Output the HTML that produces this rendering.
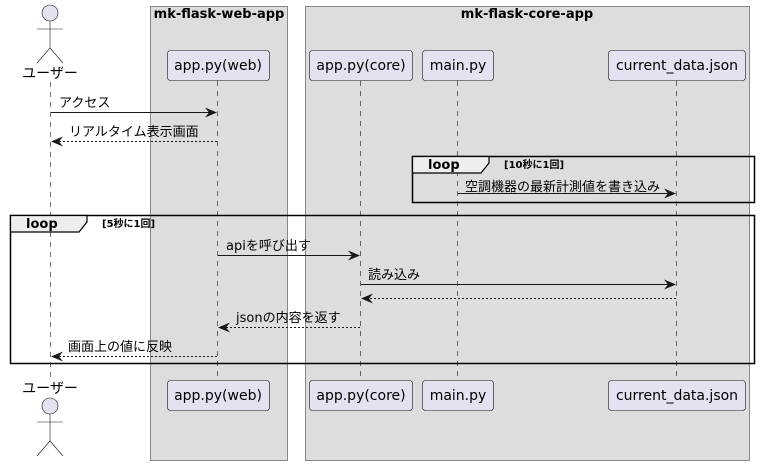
<!DOCTYPE html>
<html><head><meta charset="utf-8"><style>body{margin:0;background:#fff}svg{display:block}text{font-family:"DejaVu Sans","Noto Sans CJK JP",sans-serif}</style></head>
<body>
<svg width="760" height="465" viewBox="0 0 760 465" xmlns="http://www.w3.org/2000/svg">
<defs>
<marker id="a" viewBox="0 0 12 10" refX="11" refY="5" markerWidth="12" markerHeight="10" markerUnits="userSpaceOnUse" orient="auto"><path d="M0,0 L12,5 L0,10 L4,5 Z" fill="#181818"/></marker>
</defs>
<rect x="150.5" y="6.5" width="137" height="454" fill="#DDDDDD" stroke="#888" stroke-width="1"/>
<rect x="305.5" y="6.5" width="444" height="454" fill="#DDDDDD" stroke="#888" stroke-width="1"/>
<text x="219" y="18" font-size="13" font-weight="bold" text-anchor="middle">mk-flask-web-app</text>
<text x="527" y="18" font-size="13" font-weight="bold" text-anchor="middle">mk-flask-core-app</text>
<g stroke="#181818" stroke-width="0.6" stroke-dasharray="5,5">
<line x1="50.5" y1="82" x2="50.5" y2="378"/>
<line x1="217.5" y1="81" x2="217.5" y2="380"/>
<line x1="360.5" y1="81" x2="360.5" y2="380"/>
<line x1="457.5" y1="81" x2="457.5" y2="380"/>
<line x1="676.5" y1="81" x2="676.5" y2="380"/>
</g>
<g stroke="#181818" stroke-width="0.6" fill="#E2E2F0">
<circle cx="50" cy="13" r="8"/>
<line x1="50" y1="21" x2="50" y2="48"/><line x1="37" y1="29" x2="63" y2="29"/>
<line x1="50" y1="48" x2="37" y2="63"/><line x1="50" y1="48" x2="63" y2="63"/>
</g>
<text x="50" y="78" font-size="14" text-anchor="middle">ユーザー</text>
<text x="50" y="393" font-size="14" text-anchor="middle">ユーザー</text>
<g stroke="#181818" stroke-width="0.6" fill="#E2E2F0">
<circle cx="50" cy="406" r="8"/>
<line x1="50" y1="414" x2="50" y2="441"/><line x1="37" y1="422" x2="63" y2="422"/>
<line x1="50" y1="441" x2="37" y2="456"/><line x1="50" y1="441" x2="63" y2="456"/>
</g>
<g fill="#E2E2F0" stroke="#181818" stroke-width="0.6">
<rect x="167.5" y="50.5" width="102" height="30" rx="3"/>
<rect x="309.5" y="50.5" width="103" height="30" rx="3"/>
<rect x="422.5" y="50.5" width="71" height="30" rx="3"/>
<rect x="608.5" y="50.5" width="137" height="30" rx="3"/>
<rect x="167.5" y="380.5" width="102" height="30" rx="3"/>
<rect x="309.5" y="380.5" width="103" height="30" rx="3"/>
<rect x="422.5" y="380.5" width="71" height="30" rx="3"/>
<rect x="608.5" y="380.5" width="137" height="30" rx="3"/>
</g>
<g font-size="14" text-anchor="middle">
<text x="218" y="70">app.py(web)</text><text x="361" y="70">app.py(core)</text><text x="458" y="70">main.py</text><text x="677" y="70">current_data.json</text>
<text x="218" y="400">app.py(web)</text><text x="361" y="400">app.py(core)</text><text x="458" y="400">main.py</text><text x="677" y="400">current_data.json</text>
</g>
<g stroke="#181818" stroke-width="1" fill="none">
<line x1="51" y1="112.5" x2="216" y2="112.5" marker-end="url(#a)"/>
<line x1="217" y1="141.5" x2="52" y2="141.5" stroke-dasharray="2,2" marker-end="url(#a)"/>
<line x1="458" y1="193.5" x2="675" y2="193.5" marker-end="url(#a)"/>
<line x1="218" y1="255.5" x2="359" y2="255.5" marker-end="url(#a)"/>
<line x1="361" y1="284.5" x2="675" y2="284.5" marker-end="url(#a)"/>
<line x1="676" y1="298.5" x2="362" y2="298.5" stroke-dasharray="2,2" marker-end="url(#a)"/>
<line x1="360" y1="327.5" x2="219" y2="327.5" stroke-dasharray="2,2" marker-end="url(#a)"/>
<line x1="217" y1="356.5" x2="52" y2="356.5" stroke-dasharray="2,2" marker-end="url(#a)"/>
</g>
<g font-size="13">
<text x="59" y="107">アクセス</text>
<text x="69" y="136">リアルタイム表示画面</text>
<text x="465" y="191">空調機器の最新計測値を書き込み</text>
<text x="226" y="250">apiを呼び出す</text>
<text x="368" y="279">読み込み</text>
<text x="236" y="322">jsonの内容を返す</text>
<text x="68" y="351">画面上の値に反映</text>
</g>
<g stroke="#000" stroke-width="1.5" fill="none">
<rect x="412.5" y="156.5" width="342" height="46"/>
<rect x="10.5" y="215.5" width="744" height="148"/>
</g>
<path d="M412.5,156.5 L489,156.5 L489,163 L481,173 L412.5,173 Z" fill="#EEE" stroke="#000" stroke-width="1.2"/>
<path d="M10.5,215.5 L87,215.5 L87,222 L79,232 L10.5,232 Z" fill="#EEE" stroke="#000" stroke-width="1.2"/>
<text x="428" y="169" font-size="13" font-weight="bold">loop</text>
<text x="504" y="168" font-size="10" font-weight="bold">[10秒に1回]</text>
<text x="26" y="228" font-size="13" font-weight="bold">loop</text>
<text x="102" y="227" font-size="10" font-weight="bold">[5秒に1回]</text>
</svg>
</body></html>
